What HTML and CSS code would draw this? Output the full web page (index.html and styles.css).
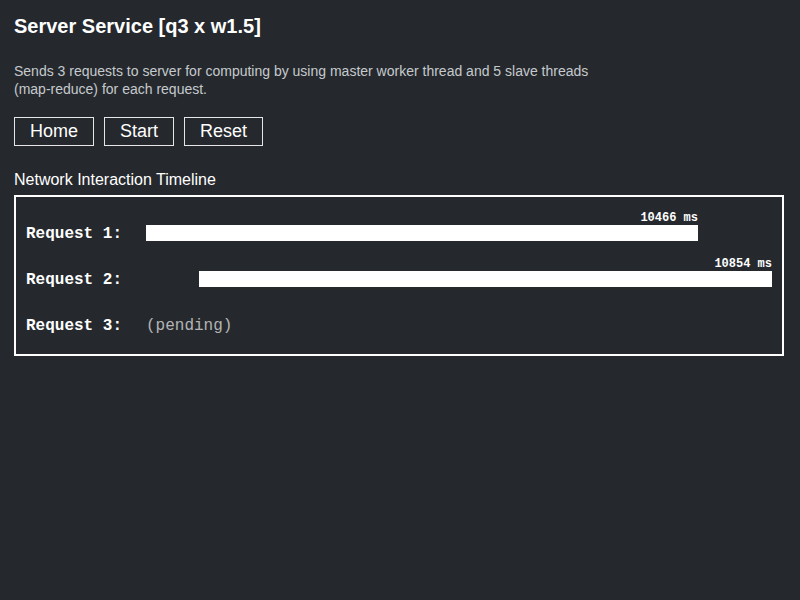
FILE: index.html
```html
<!DOCTYPE html>
<html>
<head>
<meta charset="utf-8">
<title>Server Service</title>
<link rel="stylesheet" href="styles.css">
</head>
<body>
<div class="page">
  <h1 class="title">Server Service [q3 x w1.5]</h1>
  <p class="desc">Sends 3 requests to server for computing by using master worker thread and 5 slave threads (map-reduce) for each request.</p>
  <div class="buttons">
    <button class="btn">Home</button>
    <button class="btn">Start</button>
    <button class="btn">Reset</button>
  </div>
  <h2 class="section">Network Interaction Timeline</h2>
  <div class="timeline">
    <div class="row">
      <div class="row-label">Request 1:</div>
      <div class="track">
        <div class="span" style="margin-left:0px;width:552px">
          <div class="dur">10466 ms</div>
          <div class="bar"></div>
        </div>
      </div>
    </div>
    <div class="row">
      <div class="row-label">Request 2:</div>
      <div class="track">
        <div class="span" style="margin-left:53px;width:573px">
          <div class="dur">10854 ms</div>
          <div class="bar"></div>
        </div>
      </div>
    </div>
    <div class="row">
      <div class="row-label">Request 3:</div>
      <div class="track">
        <div class="pending">(pending)</div>
      </div>
    </div>
  </div>
</div>
</body>
</html>
```

FILE: styles.css
```css
html, body {
  margin: 0;
  padding: 0;
  background: #25292d;
}

body {
  font-family: "Liberation Sans", Arial, Helvetica, sans-serif;
  color: #ffffff;
}

.page {
  padding: 14px 16px 0 14px;
  width: 770px;
}

.title {
  margin: 0;
  font-size: 20px;
  line-height: 24px;
  font-weight: bold;
  color: #ffffff;
}

.desc {
  margin: 24px 0 0 0;
  width: 600px;
  font-size: 14px;
  line-height: 18px;
  color: #c5c9cd;
}

.buttons {
  display: flex;
  gap: 10px;
  margin-top: 19px;
}

.btn {
  margin: 0;
  padding: 0 15px;
  height: 29px;
  line-height: 27px;
  font-family: "Liberation Sans", Arial, Helvetica, sans-serif;
  font-size: 18px;
  color: #ffffff;
  background: transparent;
  border: 1px solid #e6e6e6;
  border-radius: 0;
}

.section {
  margin: 24px 0 0 0;
  font-size: 16px;
  line-height: 20px;
  font-weight: normal;
  color: #ffffff;
}

.timeline {
  margin-top: 5px;
  border: 2px solid #ffffff;
  padding: 14px 10px 5px 10px;
  font-family: "Liberation Mono", "Courier New", monospace;
}

.row {
  display: flex;
  align-items: flex-end;
  height: 30px;
  margin-bottom: 16px;
}

.row-label {
  width: 120px;
  flex: none;
  height: 16px;
  line-height: 18px;
  font-size: 16px;
  font-weight: bold;
  color: #ffffff;
}

.track {
  flex: 1;
  display: flex;
}

.span {
  display: flex;
  flex-direction: column;
}

.dur {
  text-align: right;
  font-size: 12px;
  line-height: 14px;
  font-weight: bold;
  color: #ffffff;
}

.bar {
  height: 16px;
  background: #ffffff;
}

.pending {
  height: 16px;
  line-height: 18px;
  font-size: 16px;
  color: #b4b4b4;
}
```
